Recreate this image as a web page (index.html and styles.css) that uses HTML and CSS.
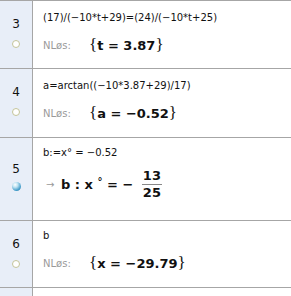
FILE: index.html
```html
<!DOCTYPE html>
<html lang="no">
<head>
    <meta charset="UTF-8">
    <title>CAS</title>
    <link rel="stylesheet" href="styles.css">
</head>
<body>
    <div class="casView">
        <div class="row r1">
            <div class="gutter">
                <span class="num">3</span>
                <span class="dot"></span>
            </div>
            <div class="cell">
                <div class="input">(17)/(−10*t+29)=(24)/(−10*t+25)</div>
                <div class="output"><span class="label">NLøs:</span><span class="math"><span class="brace">{</span>t = 3.87<span class="brace">}</span></span></div>
            </div>
        </div>
        <div class="row r2">
            <div class="gutter">
                <span class="num">4</span>
                <span class="dot"></span>
            </div>
            <div class="cell">
                <div class="input">a=arctan((−10*3.87+29)/17)</div>
                <div class="output"><span class="label">NLøs:</span><span class="math"><span class="brace">{</span>a = −0.52<span class="brace">}</span></span></div>
            </div>
        </div>
        <div class="row r3">
            <div class="gutter">
                <span class="num">5</span>
                <span class="dot ball"></span>
            </div>
            <div class="cell">
                <div class="input">b:=x° = −0.52</div>
                <div class="output"><span class="arrow">→</span><span class="math">b : x <sup>°</sup> = − <span class="frac"><span class="top">13</span><span class="bot">25</span></span></span></div>
            </div>
        </div>
        <div class="row r4">
            <div class="gutter">
                <span class="num">6</span>
                <span class="dot"></span>
            </div>
            <div class="cell">
                <div class="input">b</div>
                <div class="output"><span class="label">NLøs:</span><span class="math"><span class="brace">{</span>x = −29.79<span class="brace">}</span></span></div>
            </div>
        </div>
        <div class="row last">
            <div class="gutter"></div>
            <div class="cell"></div>
        </div>
    </div>
</body>
</html>
```
FILE: styles.css
```css
body {
    margin: 0;
    background: white;
    font-family: "DejaVu Sans", sans-serif;
    color: #111;
}
.casView {
    width: 291px;
    border-top: 1px solid #a6a6a6;
}
.row {
    display: flex;
    border-bottom: 1px solid #a6a6a6;
    height: 67px;
}
.r2 {
    height: 68px;
}
.r3 {
    height: 82px;
}
.r4 {
    height: 66px;
}
.last {
    height: 20px;
    border-bottom: none;
}
.gutter {
    width: 32px;
    flex-shrink: 0;
    background-color: #e8eef8;
    border-right: 1px solid #a6a6a6;
    display: flex;
    flex-direction: column;
    align-items: center;
}
.num {
    font-size: 12px;
    margin-top: 16px;
    line-height: 14px;
}
.r3 .num {
    margin-top: 24px;
}
.dot {
    width: 6px;
    height: 6px;
    margin-top: 9px;
    border: 1px solid #c4c49a;
    border-radius: 50%;
    background: white;
}
.ball {
    width: 9px;
    height: 9px;
    margin-top: 6px;
    border: none;
    background: radial-gradient(circle at 35% 30%, #ffffff 0%, #bfe3f2 30%, #3f9ac8 70%, #2a6e99 100%);
}
.cell {
    padding-left: 10px;
    flex: 1;
}
.input {
    font-size: 10px;
    margin-top: 11px;
    line-height: 12px;
    white-space: nowrap;
}
.output {
    display: flex;
    align-items: center;
    margin-top: 12px;
    height: 18px;
    white-space: nowrap;
}
.label {
    font-size: 10px;
    color: #9a9a9a;
    width: 46px;
}
.arrow {
    color: #999;
    font-size: 10px;
    width: 15px;
    margin-left: 3px;
}
.math {
    font-weight: bold;
    font-size: 13px;
    display: flex;
    align-items: center;
    white-space: pre;
}
.math sup {
    font-size: 10px;
    margin-top: -6px;
}
.brace {
    font-family: "Liberation Serif", serif;
    font-weight: normal;
    font-size: 17px;
}
.frac {
    display: inline-flex;
    flex-direction: column;
    align-items: center;
    margin-left: 4px;
}
.top {
    border-bottom: 1px solid #888;
    padding: 0 1px 1px;
    line-height: 14px;
}
.bot {
    line-height: 14px;
    padding-top: 1px;
}
.r3 .input {
    margin-top: 9px;
}
.r3 .output {
    margin-top: 16px;
}
.r4 .input {
    margin-top: 9px;
}
```
